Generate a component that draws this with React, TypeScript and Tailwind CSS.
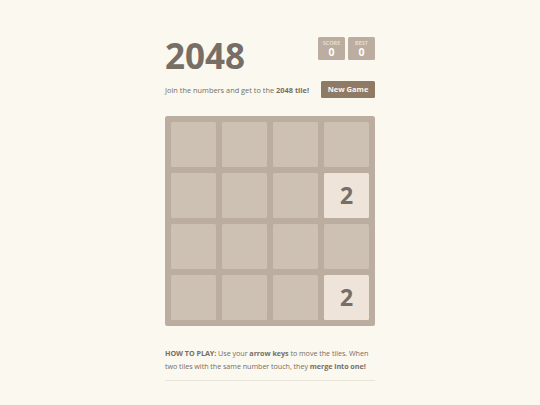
import React from "react";

const grid: (number | null)[][] = [
  [null, null, null, null],
  [null, null, null, 2],
  [null, null, null, null],
  [null, null, null, 2],
];

export default function App() {
  return (
    <div
      className="min-h-[405px] w-[540px] bg-[#faf8ef] text-[#776e65]"
      style={{ fontFamily: '"Open Sans", "Liberation Sans", sans-serif' }}
    >
      <div className="mx-auto w-[210px] pt-[37px]">
        <div className="flex items-start justify-between">
          <h1 className="mt-[1px] text-[35px] font-bold leading-[36px]">2048</h1>
          <div className="flex gap-[3px]">
            <div className="flex h-[23px] w-[27px] flex-col items-center rounded-[1.5px] bg-[#bbada0] pt-[3px]">
              <span className="text-[5.5px] font-semibold uppercase leading-[6px] text-[#eee4da]">Score</span>
              <span className="text-[10.5px] font-bold leading-[12px] text-white">0</span>
            </div>
            <div className="flex h-[23px] w-[27px] flex-col items-center rounded-[1.5px] bg-[#bbada0] pt-[3px]">
              <span className="text-[5.5px] font-semibold uppercase leading-[6px] text-[#eee4da]">Best</span>
              <span className="text-[10.5px] font-bold leading-[12px] text-white">0</span>
            </div>
          </div>
        </div>
        <div className="mt-[7px] flex items-center justify-between">
          <p className="text-[7.4px] leading-[12px]">
            Join the numbers and get to the <strong className="font-bold">2048 tile!</strong>
          </p>
          <button className="h-[17px] w-[54px] rounded-[1.5px] bg-[#8f7a66] text-[7.5px] font-bold text-[#f9f6f2]">
            New Game
          </button>
        </div>
        <div className="mt-[18px] grid h-[210px] w-[210px] grid-cols-4 grid-rows-4 gap-[6px] rounded-[2.5px] bg-[#bbada0] p-[6px]">
          {grid.flat().map((v, i) =>
            v ? (
              <div
                key={i}
                className="flex items-center justify-center rounded-[1.5px] bg-[#eee4da] text-[23px] font-bold text-[#776e65]"
              >
                {v}
              </div>
            ) : (
              <div key={i} className="rounded-[1.5px] bg-[#cdc1b4]" />
            )
          )}
        </div>
        <p className="mt-[21px] text-[7.2px] leading-[12.5px] tracking-[-0.05px]">
          <strong className="font-bold">HOW TO PLAY:</strong> Use your{" "}
          <strong className="font-bold">arrow keys</strong> to move the tiles. When two tiles with
          the same number touch, they <strong className="font-bold">merge into one!</strong>
        </p>
        <hr className="mt-[8px] border-t border-[#e9e4da]" />
      </div>
    </div>
  );
}
